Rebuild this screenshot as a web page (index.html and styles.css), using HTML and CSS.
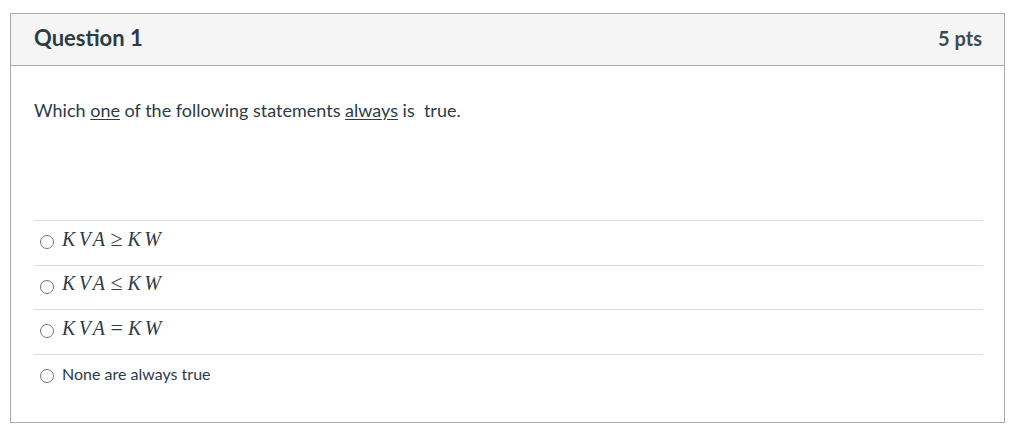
FILE: index.html
```html
<!DOCTYPE html>
<html>
<head>
<meta charset="utf-8">
<link rel="stylesheet" href="styles.css">
</head>
<body>
<div class="question">
  <div class="header">
    <h2 class="title">Question 1</h2>
    <div class="pts">5 pts</div>
  </div>
  <div class="body">
    <p class="text">Which <u>one</u> of the following statements <u>always</u> is&nbsp; true.</p>
    <div class="answers">
      <div class="answer"><span class="radio"></span><span class="math"><span class="mi">KVA</span><span class="mo">≥</span><span class="mi">KW</span></span></div>
      <div class="answer"><span class="radio"></span><span class="math"><span class="mi">KVA</span><span class="mo">≤</span><span class="mi">KW</span></span></div>
      <div class="answer"><span class="radio"></span><span class="math"><span class="mi">KVA</span><span class="mo">=</span><span class="mi">KW</span></span></div>
      <div class="answer"><span class="radio"></span><span class="plain">None are always true</span></div>
    </div>
  </div>
</div>
</body>
</html>
```
FILE: styles.css
```css
html, body {
  margin: 0;
  padding: 0;
  background: #fff;
}
body {
  font-family: Lato, "Noto Sans", sans-serif;
  color: #2d3b45;
}
.question {
  box-sizing: border-box;
  width: 995px;
  height: 410px;
  margin: 13px 0 0 10px;
  border: 1px solid #aaaaaa;
}
.header {
  box-sizing: border-box;
  height: 52px;
  border-bottom: 1px solid #aaaaaa;
  background: #f5f5f5;
  display: flex;
  align-items: center;
  justify-content: space-between;
  padding: 0 22px 4px 23px;
}
.title {
  margin: 0;
  font-size: 22px;
  font-weight: 700;
  line-height: 26px;
}
.pts {
  font-size: 20px;
  font-weight: 700;
  line-height: 26px;
  color: #3d4b55;
}
.body {
  padding: 32px 21px 0 23px;
}
.text {
  margin: 0;
  font-size: 18px;
  line-height: 24px;
}
.text u {
  text-underline-offset: 2px;
}
.answers {
  margin-top: 98px;
}
.answer {
  box-sizing: border-box;
  height: 44.5px;
  border-top: 1px solid #dcdcdc;
  display: flex;
  align-items: center;
}
.radio {
  box-sizing: border-box;
  width: 14px;
  height: 14px;
  border: 1px solid #777;
  border-radius: 50%;
  margin-left: 6px;
  margin-right: 8px;
  margin-bottom: 1px;
  flex: none;
}
.math {
  font-family: "Liberation Serif", "Times New Roman", serif;
  font-size: 20px;
  line-height: 22px;
  padding-bottom: 8px;
  color: #2d3b45;
  display: flex;
}
.mi {
  font-style: italic;
  letter-spacing: 3.4px;
}
.mo {
  font-size: 22px;
  margin: 0 5px 0 2px;
}
.plain {
  font-size: 16px;
  line-height: 19px;
  padding-bottom: 5px;
}
```
